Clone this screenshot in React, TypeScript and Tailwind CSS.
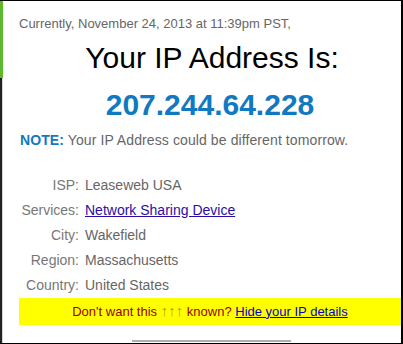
export default function App() {
    const rows = [
        { label: 'ISP:', value: 'Leaseweb USA' },
        { label: 'Services:', value: 'Network Sharing Device', link: true },
        { label: 'City:', value: 'Wakefield' },
        { label: 'Region:', value: 'Massachusetts' },
        { label: 'Country:', value: 'United States' },
    ]

    return (
        <div className="w-[403px] h-[344px] bg-white flex border-t border-b border-r-2 border-black font-['Liberation_Sans',Arial,sans-serif] overflow-hidden">
            {/* Left edge strip */}
            <div className="w-[3px] flex flex-col shrink-0">
                <div className="h-[77px] bg-[#5cb82e]" />
                <div className="flex-1 flex">
                    <div className="w-[2px] bg-[#222]" />
                    <div className="w-[1px] bg-[#d4d4d4]" />
                </div>
            </div>

            <div className="flex-1 flex flex-col pl-[16px]">
                {/* Timestamp */}
                <p className="mt-[15px] text-[13px] leading-[15px] text-[#666]">
                    Currently, November 24, 2013 at 11:39pm PST,
                </p>

                {/* Title + IP */}
                <h1 className="mt-[10px] text-center text-[30px] leading-[34px] text-black pl-[4px]">Your IP Address Is:</h1>
                <div className="mt-[13px] text-center text-[30px] leading-[34px] font-bold text-[#1079c1]">207.244.64.228</div>

                <p className="mt-[10px] pl-[1px] text-[14px] leading-[16px] text-[#666] tracking-[0.1px]">
                    <span className="font-bold text-[#1079c1]">NOTE:</span> Your IP Address could be different tomorrow.
                </p>

                {/* Details */}
                <div className="mt-[24px] flex flex-col">
                    {rows.map((row) => (
                        <div key={row.label} className="flex h-[25px] items-center text-[14px] leading-[16px]">
                            <span className="w-[60px] text-right text-[#777]">{row.label}</span>
                            <span className="pl-[6px] text-[#666]">
                                {row.link ? (
                                    <a href="#" className="underline text-[#2a0ea6]">{row.value}</a>
                                ) : row.value}
                            </span>
                        </div>
                    ))}
                </div>

                {/* Yellow banner */}
                <div className="mt-[1px] h-[27px] bg-[#ffff00] flex items-center justify-center text-[13px] text-[#990000]">
                    Don't want this&nbsp;<span className="text-[#c49a00] text-[15px]">↑↑↑</span>&nbsp;known?&nbsp;
                    <a href="#" className="underline text-[#0000cc]">Hide your IP details</a>
                </div>

                {/* Scroll thumb */}
                <div className="mt-auto mb-[1px] ml-[113px] w-[159px] h-[2px] bg-[#b0b0b0]" />
            </div>
        </div>
    )
}
